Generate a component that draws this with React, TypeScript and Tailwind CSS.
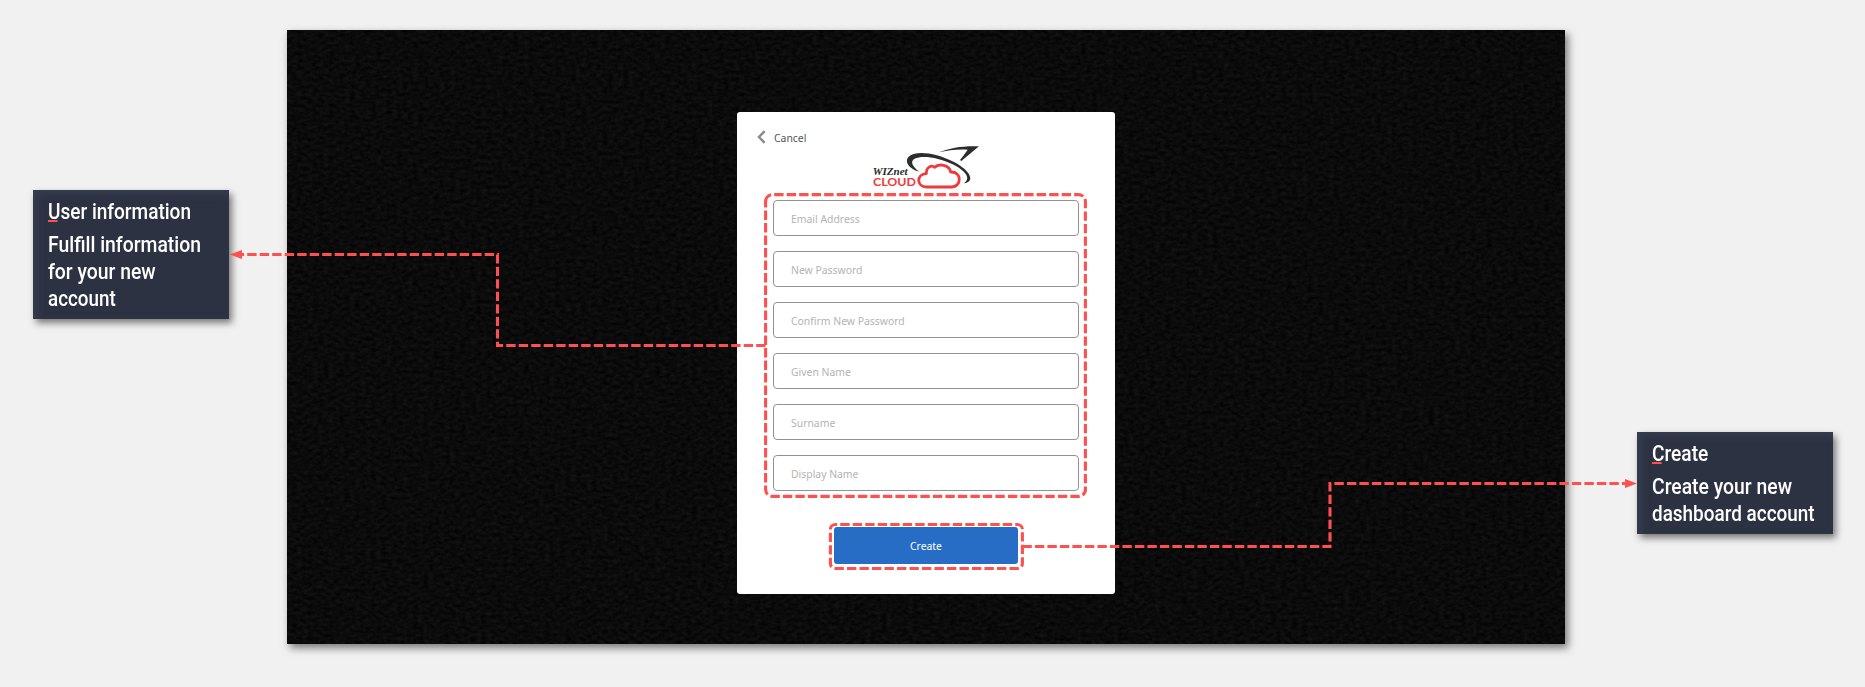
import React from "react";

const fields = [
  "Email Address",
  "New Password",
  "Confirm New Password",
  "Given Name",
  "Surname",
  "Display Name",
];

function Texture() {
  return (
    <svg className="absolute inset-0 h-full w-full" aria-hidden="true">
      <filter id="grain" x="0" y="0" width="100%" height="100%" colorInterpolationFilters="sRGB">
        <feTurbulence type="fractalNoise" baseFrequency="0.19 0.27" numOctaves={4} seed={11} />
        <feColorMatrix values="0.09 0 0 0 -0.002  0.09 0 0 0 -0.002  0.09 0 0 0 -0.002  0 0 0 0 1" />
      </filter>
      <rect width="100%" height="100%" filter="url(#grain)" />
    </svg>
  );
}

function Logo() {
  return (
    <svg width="130" height="65" viewBox="0 0 390 195" className="shrink-0">
      <path
        d="M178 107C144 98 130 72 150 59C172 43 232 52 282 78C330 103 348 137 312 142C334 128 318 105 278 85C236 64 186 57 164 68C150 76 156 90 178 107Z"
        fill="#2d2d2d"
      />
      <path d="M236 49C272 35 310 29 357 31L304 75L300 72C308 62 316 51 323 41C292 39 264 43 236 49Z" fill="#2d2d2d" />
      <path
        d="M200 153C169 153 168 115 199 113C198 92 216 86 224 94C236 82 268 86 272 108C306 106 306 153 274 153Z"
        fill="#fff"
        stroke="#ee3a3a"
        strokeWidth="8.5"
        strokeLinejoin="round"
      />
      <text x="38" y="116" fontFamily="Liberation Serif, serif" fontWeight="700" fontStyle="italic" fontSize="29" textLength="105" lengthAdjust="spacingAndGlyphs" fill="#2a2a2a">
        WIZnet
      </text>
      <text x="39" y="151" fontFamily="Lato, sans-serif" fontWeight="700" fontSize="35" textLength="129" lengthAdjust="spacingAndGlyphs" fill="#ee3a3a">
        CLOUD
      </text>
    </svg>
  );
}

function Line({ children, scale }: { children: React.ReactNode; scale: string }) {
  return <div className={`w-max origin-left whitespace-nowrap ${scale}`}>{children}</div>;
}

function Note({ className, children }: { className: string; children: React.ReactNode }) {
  return (
    <aside
      className={`w-[196px] shrink-0 bg-[#2c3242] pl-[15px] font-['Roboto',sans-serif] text-[22px] leading-[27px] font-medium text-white shadow-[3px_4px_7px_rgba(0,0,0,0.5),inset_4px_4px_8px_rgba(62,70,88,0.6)] ${className}`}
    >
      {children}
    </aside>
  );
}

function Initial({ children }: { children: string }) {
  return (
    <span className="bg-[linear-gradient(#ff5050,#ff5050)] bg-[length:82%_2px] bg-[position:0_21px] bg-no-repeat">
      {children}
    </span>
  );
}

function Connectors() {
  return (
    <svg className="pointer-events-none absolute inset-0" width="1865" height="687" viewBox="0 0 1865 687">
      <g fill="none" stroke="#ff5050" strokeWidth="3.1" strokeDasharray="9.4 3.1">
        <path d="M765.6 201.6A7 7 0 0 1 772.6 194.6H1078.4A7 7 0 0 1 1085.4 201.6V489.4A7 7 0 0 1 1078.4 496.4H772.6A7 7 0 0 1 765.6 489.4Z" />
        <path d="M830.4 529.5A5 5 0 0 1 835.4 524.5H1017.4A5 5 0 0 1 1022.4 529.5V563.5A5 5 0 0 1 1017.4 568.5H835.4A5 5 0 0 1 830.4 563.5Z" />
        <path d="M765.6 345.5H497.5V254.5H240" />
        <path d="M1022.4 546.5H1330V483.5H1626" />
      </g>
      <path d="M229.6 254.5L242 250V259Z" fill="#ff5050" />
      <path d="M1637 483.5L1625 479V488Z" fill="#ff5050" />
    </svg>
  );
}

export default function App() {
  return (
    <div className="relative flex h-[687px] w-[1865px] items-start overflow-hidden bg-[#f1f1f1] pl-[33px]">
      <Note className="mt-[190px] h-[129px] pt-[8px]">
        <Line scale="scale-x-[0.865]">
          <Initial>U</Initial>ser information
        </Line>
        <div className="mt-[6px]">
          <Line scale="scale-x-[0.88]">Fulfill information</Line>
          <Line scale="scale-x-[0.88]">for your new</Line>
          <Line scale="scale-x-[0.855]">account</Line>
        </div>
      </Note>

      <main className="relative mt-[30px] ml-[58px] flex h-[614px] w-[1278px] shrink-0 justify-center bg-[#0b0b0b] shadow-[3px_4px_8px_rgba(0,0,0,0.5)]">
        <Texture />
        <section className="relative mt-[81.5px] flex h-[482px] w-[378px] flex-col rounded-[3px] bg-white font-['Noto_Sans',sans-serif] text-[10.4px]">
          <div className="flex h-[24px] items-start pt-[18px] pl-[20px]">
            <button className="flex h-[16px] shrink-0 items-center gap-[8px] leading-[16px] text-[#555]">
              <svg width="9" height="14" viewBox="0 0 9 14" className="-mt-px">
                <path d="M7.6 1.2L2 7L7.6 12.8" fill="none" stroke="#8c8c8c" strokeWidth="2.5" />
              </svg>
              Cancel
            </button>
          </div>
          <div className="flex h-[64.5px] pl-[123px]">
            <Logo />
          </div>
          <form className="flex flex-col gap-[15px] pl-[36px]">
            {fields.map((f) => (
              <div key={f} className="flex h-[36px] w-[306px] items-center rounded-[4px] border border-[#929292] pt-[4px] pl-[17px] text-[#b3b3b3]">
                {f}
              </div>
            ))}
          </form>
          <button className="mt-[36px] ml-[97px] h-[36.5px] w-[184px] rounded-[3px] bg-[#276dc6] pt-[4px] text-white">Create</button>
        </section>
      </main>

      <Note className="mt-[432px] ml-[72px] h-[102px] pt-[8px]">
        <Line scale="scale-x-[0.87]">
          <Initial>C</Initial>reate
        </Line>
        <div className="mt-[6px]">
          <Line scale="scale-x-[0.88]">Create your new</Line>
          <Line scale="scale-x-[0.86]">dashboard account</Line>
        </div>
      </Note>
      <Connectors />
    </div>
  );
}
